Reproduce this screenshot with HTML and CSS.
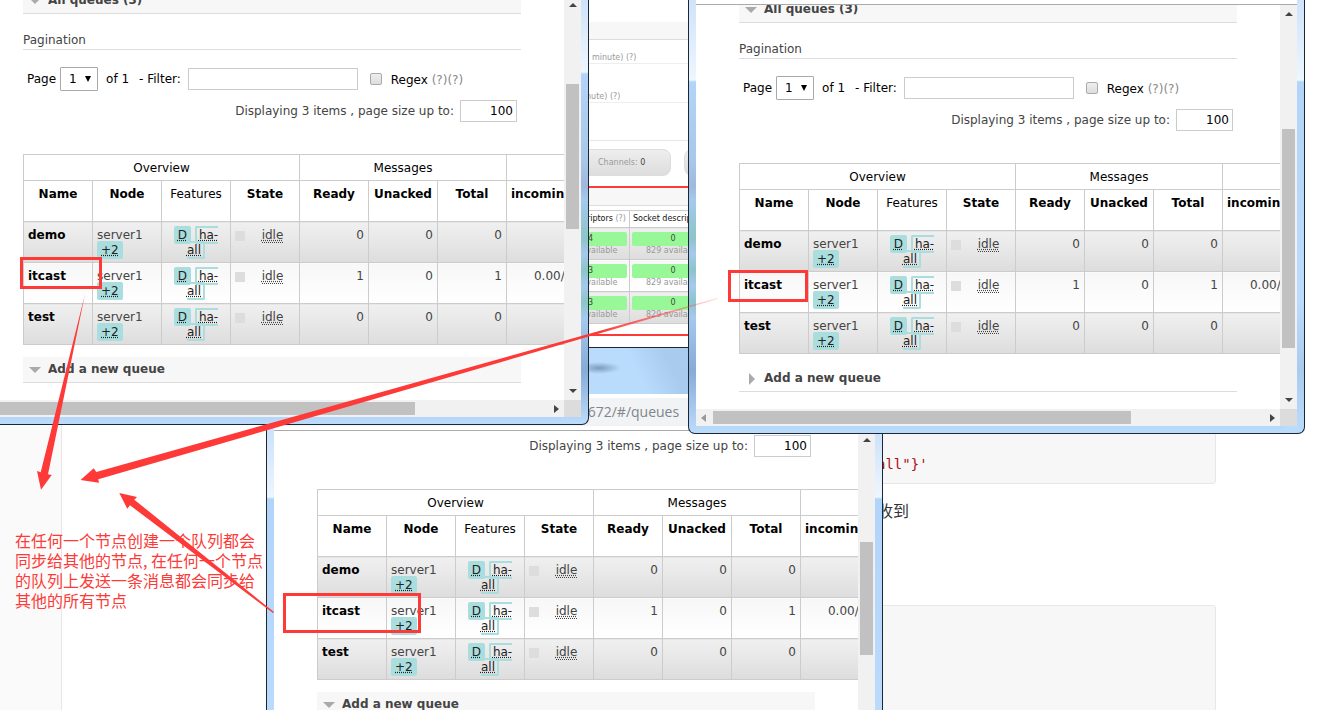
FILE: index.html
```html
<!DOCTYPE html>
<html lang="zh-CN">
<head>
<meta charset="utf-8">
<title>RabbitMQ queues</title>
<link rel="stylesheet" href="styles.css">
</head>
<body>
<div class="desktop">

  <div class="notes">
    <aside class="notes-side"></aside>
    <main class="notes-main">
      <pre class="code"><code>all"}'</code></pre>
      <p class="notes-text">收到</p>
      <pre class="code code-tall"></pre>
    </main>
  </div>

  <section class="backwin">
    <div class="b-head"></div>
    <div class="b-line b-line-first">minute) (?)</div>
    <div class="b-line b-line-second">minute) (?)</div>
    <div class="b-gap"></div>
    <div class="b-pills"><span class="pill">Channels: <b>0</b></span><span class="pill"></span></div>
    <div class="b-boxed">
      <div class="b-bar"></div>
      <table class="b-table">
        <tr><th class="b-first">descriptors <i>(?)</i></th><th>Socket descriptors</th></tr>
        <tr><td class="b-first"><span class="ok">54</span>8192 available</td><td><span class="ok">0</span>829 available</td></tr>
        <tr><td class="b-first"><span class="ok">53</span>8192 available</td><td><span class="ok">0</span>829 available</td></tr>
        <tr><td class="b-first"><span class="ok">53</span>8192 available</td><td><span class="ok">0</span>829 available</td></tr>
      </table>
    </div>
  </section>

  <section class="win win-c">
    <div class="titlebar"></div>
    <div class="address">:15672/#/queues</div>
    <div class="view">
      <div class="page">
        <div class="size-row"><label for="size-c">Displaying 3 items , page size up to:</label><input id="size-c" class="size" type="text" value="100"></div>
        <table class="queues">
          <thead>
            <tr><th colspan="4">Overview</th><th colspan="3">Messages</th><th></th></tr>
            <tr class="cols"><th>Name</th><th>Node</th><th class="plain">Features</th><th>State</th><th>Ready</th><th>Unacked</th><th>Total</th><th>incoming</th></tr>
          </thead>
          <tbody>
            <tr><td class="name">demo</td><td>server1 <abbr class="tag">+2</abbr></td><td class="feat"><abbr class="tag">D</abbr> <abbr class="policy">ha-all</abbr></td><td><div class="state"><i></i><abbr>idle</abbr></div></td><td class="num">0</td><td class="num">0</td><td class="num">0</td><td></td></tr>
            <tr><td class="name">itcast</td><td>server1 <abbr class="tag">+2</abbr></td><td class="feat"><abbr class="tag">D</abbr> <abbr class="policy">ha-all</abbr></td><td><div class="state"><i></i><abbr>idle</abbr></div></td><td class="num">1</td><td class="num">0</td><td class="num">1</td><td class="num">0.00/s</td></tr>
            <tr><td class="name">test</td><td>server1 <abbr class="tag">+2</abbr></td><td class="feat"><abbr class="tag">D</abbr> <abbr class="policy">ha-all</abbr></td><td><div class="state"><i></i><abbr>idle</abbr></div></td><td class="num">0</td><td class="num">0</td><td class="num">0</td><td></td></tr>
          </tbody>
        </table>
        <h2 class="section">Add a new queue</h2>
      </div>
      <div class="vbar"><span class="up"></span><span class="thumb"></span></div>
    </div>
  </section>

  <section class="win win-a">
    <div class="view">
      <div class="page">
        <h2 class="section">All queues (3)</h2>
        <h3 class="sub">Pagination</h3>
        <div class="filter-row">
          <label for="page-a">Page</label>
          <span class="drop"><select id="page-a"><option>1</option></select></span>
          <span class="of">of 1</span>
          <label for="filter-a">- Filter:</label>
          <input id="filter-a" class="filter" type="text">
          <input id="regex-a" class="tick" type="checkbox">
          <label class="regex" for="regex-a">Regex <span>(?)(?)</span></label>
        </div>
        <div class="size-row"><label for="size-a">Displaying 3 items , page size up to:</label><input id="size-a" class="size" type="text" value="100"></div>
        <table class="queues">
          <thead>
            <tr><th colspan="4">Overview</th><th colspan="3">Messages</th><th></th></tr>
            <tr class="cols"><th>Name</th><th>Node</th><th class="plain">Features</th><th>State</th><th>Ready</th><th>Unacked</th><th>Total</th><th>incoming</th></tr>
          </thead>
          <tbody>
            <tr><td class="name">demo</td><td>server1 <abbr class="tag">+2</abbr></td><td class="feat"><abbr class="tag">D</abbr> <abbr class="policy">ha-all</abbr></td><td><div class="state"><i></i><abbr>idle</abbr></div></td><td class="num">0</td><td class="num">0</td><td class="num">0</td><td></td></tr>
            <tr><td class="name">itcast</td><td>server1 <abbr class="tag">+2</abbr></td><td class="feat"><abbr class="tag">D</abbr> <abbr class="policy">ha-all</abbr></td><td><div class="state"><i></i><abbr>idle</abbr></div></td><td class="num">1</td><td class="num">0</td><td class="num">1</td><td class="num">0.00/s</td></tr>
            <tr><td class="name">test</td><td>server1 <abbr class="tag">+2</abbr></td><td class="feat"><abbr class="tag">D</abbr> <abbr class="policy">ha-all</abbr></td><td><div class="state"><i></i><abbr>idle</abbr></div></td><td class="num">0</td><td class="num">0</td><td class="num">0</td><td></td></tr>
          </tbody>
        </table>
        <h2 class="section">Add a new queue</h2>
      </div>
      <div class="vbar"><span class="up"></span><span class="thumb"></span><span class="down"></span></div>
    </div>
    <div class="hbar"><span class="thumb"></span><span class="right"></span><span class="corner"></span></div>
  </section>

  <section class="win win-b">
    <div class="view">
      <div class="page">
        <h2 class="section">All queues (3)</h2>
        <h3 class="sub">Pagination</h3>
        <div class="filter-row">
          <label for="page-b">Page</label>
          <span class="drop"><select id="page-b"><option>1</option></select></span>
          <span class="of">of 1</span>
          <label for="filter-b">- Filter:</label>
          <input id="filter-b" class="filter" type="text">
          <input id="regex-b" class="tick" type="checkbox">
          <label class="regex" for="regex-b">Regex <span>(?)(?)</span></label>
        </div>
        <div class="size-row"><label for="size-b">Displaying 3 items , page size up to:</label><input id="size-b" class="size" type="text" value="100"></div>
        <table class="queues">
          <thead>
            <tr><th colspan="4">Overview</th><th colspan="3">Messages</th><th></th></tr>
            <tr class="cols"><th>Name</th><th>Node</th><th class="plain">Features</th><th>State</th><th>Ready</th><th>Unacked</th><th>Total</th><th>incoming</th></tr>
          </thead>
          <tbody>
            <tr><td class="name">demo</td><td>server1 <abbr class="tag">+2</abbr></td><td class="feat"><abbr class="tag">D</abbr> <abbr class="policy">ha-all</abbr></td><td><div class="state"><i></i><abbr>idle</abbr></div></td><td class="num">0</td><td class="num">0</td><td class="num">0</td><td></td></tr>
            <tr><td class="name">itcast</td><td>server1 <abbr class="tag">+2</abbr></td><td class="feat"><abbr class="tag">D</abbr> <abbr class="policy">ha-all</abbr></td><td><div class="state"><i></i><abbr>idle</abbr></div></td><td class="num">1</td><td class="num">0</td><td class="num">1</td><td class="num">0.00/s</td></tr>
            <tr><td class="name">test</td><td>server1 <abbr class="tag">+2</abbr></td><td class="feat"><abbr class="tag">D</abbr> <abbr class="policy">ha-all</abbr></td><td><div class="state"><i></i><abbr>idle</abbr></div></td><td class="num">0</td><td class="num">0</td><td class="num">0</td><td></td></tr>
          </tbody>
        </table>
        <h2 class="section closed">Add a new queue</h2>
      </div>
      <div class="vbar"><span class="up"></span><span class="thumb"></span><span class="down"></span></div>
    </div>
    <div class="hbar"><span class="left"></span><span class="thumb"></span><span class="right"></span><span class="corner"></span></div>
  </section>

  <div class="mark mark-a"></div>
  <div class="mark mark-b"></div>
  <div class="mark mark-c"></div>
  <svg class="arrows" width="730" height="630" viewBox="0 0 730 630" aria-hidden="true">
    <defs>
      <linearGradient id="fade" gradientUnits="userSpaceOnUse" x1="600" y1="0" x2="718" y2="0">
        <stop offset="0" stop-color="#fd3a38"/><stop offset="1" stop-color="#fd3a38" stop-opacity=".15"/>
      </linearGradient>
    </defs>
    <path fill="#fd3a38" d="M85 294 L40.700 472.300 L37 471 L41 489.700 L51.700 475 L48 474.300 Z"/>
    <path fill="url(#fade)" d="M717 298 L96.300 472 L93.700 468.300 L80.500 480 L99 482.700 L98.300 479.300 L718 299 Z"/>
    <path fill="#fd3a38" d="M274 612 L134.300 499.700 L137 497 L119.300 493 L127.300 508.700 L130 505.300 L273 613 Z"/>
  </svg>
  <p class="remark">在任何一个节点创建一个队列都会<br>同步给其他的节点, 在任何一个节点<br>的队列上发送一条消息都会同步给<br>其他的所有节点</p>
</div>
</body>
</html>
```

FILE: styles.css
```css
* { box-sizing: border-box; }

body {
  margin: 0;
  background: #fff;
  color: #444;
  font: 12px/15px "DejaVu Sans", Verdana, sans-serif;
}

.desktop { position: relative; height: 100vh; overflow: hidden; }

/* document behind the windows */
.notes { display: flex; height: 100%; }
.notes-side { width: 62px; background: #fafafa; border-right: 1px solid #e7e7e7; }
.notes-main { flex: 1; padding: 400px 110px 0 798px; }
.code {
  height: 84px;
  margin: 0;
  padding: 53px 16px 0;
  background: #f7f7f7;
  border: 1px solid #e7e7e7;
  border-radius: 3px;
  color: #a11;
  font: 14px/20px "Liberation Mono", monospace;
}
.code-tall { height: 200px; }
.notes-text {
  margin: 15px 0 84px 17px;
  color: #333;
  font: 16px/22px "Noto Sans CJK SC", sans-serif;
}

/* overview window */
.backwin {
  position: absolute;
  left: 546px;
  top: 0;
  width: 174px;
  height: 347px;
  padding-top: 22px;
  background: #fff;
  color: #999;
  font-size: 8px;
  line-height: 12px;
}
.b-head { height: 18px; background: #f7f7f7; border-bottom: 1px solid #ddd; }
.b-line { border-bottom: 1px solid #eee; }
.b-line-first { height: 24px; padding: 12px 0 0 46px; }
.b-line-second { height: 39px; padding: 27px 0 0 30px; }
.b-gap { height: 38px; border-bottom: 1px solid #e7e7e7; }
.b-pills { display: flex; gap: 13px; padding: 8px 0 10px; }
.pill {
  flex: none;
  width: 125px;
  height: 27px;
  padding: 7px 0 6px 51px;
  border: 1px solid #ddd;
  border-radius: 8px;
  background: linear-gradient(#eee, #ddd);
}
.pill b { color: #444; font-weight: normal; }
.b-boxed { height: 150px; border-top: 2px solid #fd3a38; border-bottom: 2px solid #fd3a38; }
.b-bar { height: 18px; margin-bottom: 4px; background: #f7f7f7; border-bottom: 1px solid #ddd; }
.b-table { border-collapse: collapse; table-layout: fixed; width: 171px; }
.b-table th, .b-table td { border: 1px solid #ccc; padding: 3px 2px; text-align: center; }
.b-table th { height: 17px; padding: 2px 3px; color: #111; font-weight: normal; white-space: nowrap; text-align: left; }
.b-table i { color: #999; font-style: normal; }
.b-table .b-first { width: 83px; }
.b-table th.b-first { text-align: right; }
.b-table td { height: 32px; background: linear-gradient(#f0f0f0, #ddd); white-space: nowrap; line-height: 10px; }
.b-table tr:nth-child(3) td { background: linear-gradient(#f7f7f7, #fff); }
.ok { display: block; border-radius: 2px; background: #98f898; color: #444; line-height: 14px; }

/* windows */
.win {
  position: absolute;
  display: flex;
  flex-direction: column;
  border: 1px solid #1c2735;
  background: linear-gradient(#cfe3fa, #eef6fe 72px, #b1d4f8 74px, #a8c8ea 160px, #9fb8dc 186px, #a5c9ee 200px, #8cc4c8 238px, #a5c9ee 254px, #8cc4c8 270px, #a5c9ee 286px, #8cc4c8 302px, #a5c9ee 318px, #86abd6 370px, #bcdcfd);
}
.win-a {
  left: 0;
  top: 0;
  width: 589px;
  height: 425px;
  padding: 0 7px 7px 0;
  border-width: 0 1px 1px 0;
  border-radius: 0 0 7px 0;
}
.win-b {
  left: 688px;
  top: 0;
  width: 617px;
  height: 434px;
  padding: 0 7px 7px;
  border-width: 0 1px 1px;
  border-radius: 0 0 7px 7px;
  background:
    linear-gradient(#cfe3fa, #eef6fe 80px, #b1d4f8 82px, #bcdcfd 300px, #a9cbee 370px, #bcdcfd) right / 20px 100% no-repeat,
    linear-gradient(#cfe3fa, #eef6fe 80px, #b1d4f8 82px, #a8c8ea 160px, #9fb8dc 186px, #a5c9ee 200px, #8cc4c8 238px, #a5c9ee 254px, #8cc4c8 270px, #a5c9ee 286px, #8cc4c8 302px, #a5c9ee 318px, #86abd6 370px, #bcdcfd);
}
.win-c {
  left: 266px;
  top: 347px;
  width: 617px;
  height: 400px;
  padding: 0 7px;
  border-radius: 7px 7px 0 0;
  background: linear-gradient(#b8dafb, #cfe3fa 90px, #eef6fe 149px, #b1d4f8 151px, #bcdcfd);
}
.win-b .view { margin-top: 4px; border-top: 1px solid #aaa; box-shadow: 0 -4px #fff; }
.win-c .view { border-top: 1px solid #aaa; }
.titlebar {
  height: 46px;
  background:
    radial-gradient(ellipse 22px 6px at 325px 20px, #7d9cbc, transparent),
    linear-gradient(65deg, #b9dcfd 60%, #a9cbee 66%, #b0d2f4);
}
.address {
  height: 36px;
  padding: 4px 0 0 294px;
  border: solid #fff;
  border-width: 4px 0;
  background: #f1f3f4;
  color: #80868b;
  font: 14px/20px "Open Sans", sans-serif;
}

.view { flex: 1; min-height: 0; display: flex; overflow: hidden; background: #fff; }
.page { flex: 1; min-width: 0; overflow: hidden; padding-left: 23px; }
.win-b .page, .win-c .page { padding-left: 43px; }
.win-c .page { padding-top: 4px; }

/* scroll bars */
.vbar { flex: none; width: 17px; display: flex; flex-direction: column; align-items: center; background: #f1f1f1; }
.vbar .thumb { width: 13px; background: #c1c1c1; }
.hbar { flex: none; height: 17px; display: flex; align-items: center; background: #f1f1f1; }
.hbar .thumb { height: 13px; background: #c1c1c1; }
.corner { width: 17px; height: 17px; background: #dcdcdc; }
.up, .down { border: solid transparent; border-width: 0 4px; }
.up { border-bottom: 4px solid #444; }
.down { margin: auto 0 7px; border-top: 4px solid #444; }
.left, .right { border: solid transparent; border-width: 4px 0; }
.left { margin: 0 7px 0 5px; border-right: 5px solid #999; }
.right { margin: 0 5px 0 auto; border-left: 5px solid #444; }
.win-a .up { margin-top: 3px; }
.win-a .vbar .thumb { height: 145px; margin-top: 77px; }
.win-a .hbar .thumb { width: 415px; }
.win-b .up { margin-top: 7px; }
.win-b .vbar .thumb { height: 219px; margin-top: 113px; }
.win-b .hbar .thumb { width: 418px; }
.win-c .up { margin-top: 7px; }
.win-c .vbar .thumb { height: 113px; margin-top: 100px; }

/* queue page */
.section {
  display: flex;
  align-items: center;
  width: 498px;
  height: 26px;
  margin: 12px 0 0;
  padding-left: 6px;
  background: #f7f7f7;
  border-bottom: 1px solid #ddd;
  font-size: 12px;
}
.section::before {
  content: "";
  margin-right: 7px;
  border: solid transparent;
  border-width: 6px 6px 0;
  border-top-color: #aaa;
}
.closed { padding-left: 10px; background: #fff; }
.closed::before { border-width: 6px 0 6px 6px; border-color: transparent transparent transparent #aaa; margin-right: 9px; }
.win-a .section:first-child { margin-top: -12px; }
.win-b .section:first-child { margin-top: -8px; }
.sub {
  width: 498px;
  margin: 19px 0 0;
  padding-bottom: 1px;
  border-bottom: 1px solid #ddd;
  font-size: 12px;
  font-weight: normal;
}
.filter-row { display: flex; align-items: center; margin-top: 17px; padding-left: 4px; color: #000; }
.drop { position: relative; margin: 0 8px 0 4px; }
.drop::after {
  content: "";
  position: absolute;
  right: 7px;
  top: 9px;
  border: solid transparent;
  border-width: 6px 3px 0;
  border-top-color: #000;
  pointer-events: none;
}
select {
  appearance: none;
  display: block;
  width: 38px;
  height: 24px;
  padding: 0 8px;
  border: 1px solid #a9a9a9;
  border-radius: 1px;
  background: #fff;
  color: #000;
  font: inherit;
}
.of { margin-right: 10px; }
.filter, .size { height: 22px; border: 1px solid #ccc; background: #fff; color: #000; font: inherit; }
.filter { width: 170px; margin-left: 7px; }
.tick {
  appearance: none;
  width: 12px;
  height: 12px;
  margin: 0 9px 0 12px;
  border: 1px solid #aaa;
  border-radius: 2px;
  background: linear-gradient(#eee, #ddd);
}
.regex { padding-top: 3px; }
.regex span { color: #888; }
.size-row { display: flex; align-items: center; justify-content: flex-end; gap: 6px; width: 494px; margin-top: 9px; }
.win-c .size-row { margin-top: 0; }
.size { width: 57px; padding: 0 3px; text-align: right; }

.queues { width: 553px; margin-top: 32px; border-collapse: collapse; table-layout: fixed; }
.queues th, .queues td { padding: 6px 4px 4px; border: 1px solid #ccc; vertical-align: top; }
.queues th { height: 26px; color: #000; font-weight: normal; text-align: center; }
.queues .cols th { height: 41px; font-weight: bold; }
.queues .cols .plain { font-weight: normal; }
.queues td { height: 41px; background: linear-gradient(#f0f0f0, #ddd); }
.queues tbody tr:nth-child(even) td { background: linear-gradient(#f7f7f7, #fff); }
.queues .name { color: #000; font-weight: bold; }
.queues .num { text-align: right; }
.queues .feat { text-align: center; }
.state { display: flex; align-items: center; }
.state i { width: 10px; height: 10px; margin-right: 5px; background: #ddd; }
.state abbr { margin: 0 auto; border-bottom: 1px dotted #444; line-height: 14px; }
abbr { text-decoration: underline dotted; }
.tag { padding: 2px 4px; border-radius: 2px; background: #aadddd; color: #222; }
.policy { padding: 0 2px; border: 2px solid #aadddd; border-radius: 2px; color: #222; }

/* annotations */
.mark { position: absolute; border: 3px solid #fd3a38; }
.mark-a { left: 20px; top: 257px; width: 82px; height: 32px; }
.mark-b { left: 728px; top: 270px; width: 80px; height: 32px; }
.mark-c { left: 283px; top: 593px; width: 138px; height: 40px; }
.arrows { position: absolute; left: 0; top: 0; pointer-events: none; }
.remark {
  position: absolute;
  left: 15px;
  top: 530px;
  margin: 0;
  color: #fd3a38;
  font: 16px/20px "Noto Sans CJK SC", sans-serif;
  white-space: nowrap;
}
```
